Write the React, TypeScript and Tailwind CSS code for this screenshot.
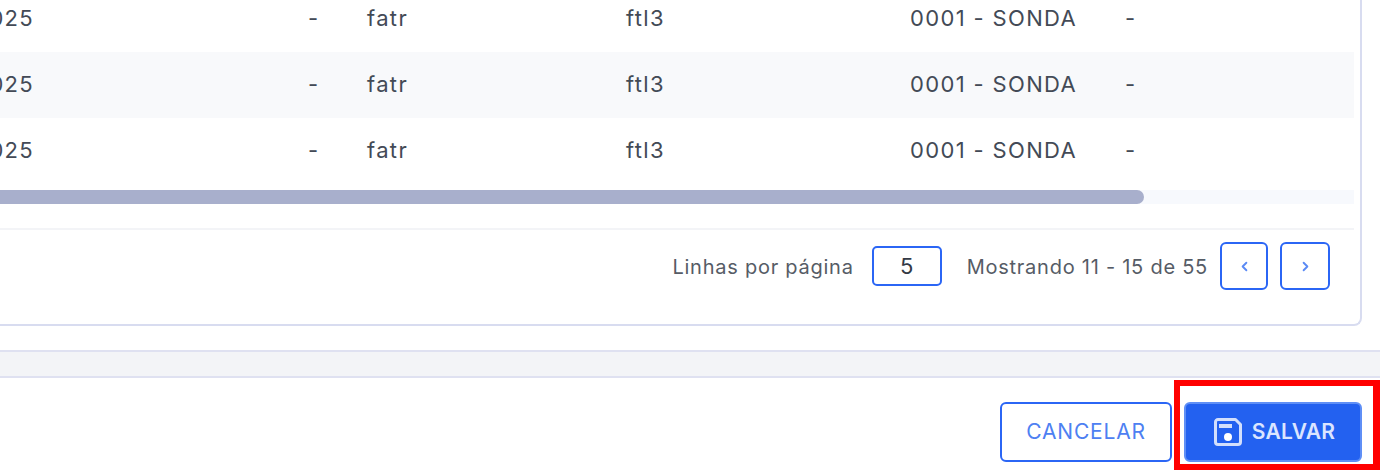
import React from 'react';
import { ChevronLeft, ChevronRight } from 'lucide-react';

const rows = [
  { shaded: false },
  { shaded: true },
  { shaded: false },
];

const SaveIcon = () => (
  <svg width="30" height="30" viewBox="0 0 30 30" fill="none" className="text-[#d3dffc]">
    <path
      d="M5 2.5h17.5L27.5 7.5V25a2.5 2.5 0 0 1-2.5 2.5H5A2.5 2.5 0 0 1 2.5 25V5A2.5 2.5 0 0 1 5 2.5z"
      stroke="currentColor"
      strokeWidth="3"
      strokeLinejoin="round"
    />
    <rect x="6" y="7" width="13" height="4" fill="currentColor" />
    <circle cx="15" cy="20" r="4" fill="#fff" />
  </svg>
);

const App: React.FC = () => {
  return (
    <div className="w-[1380px] h-[470px] overflow-hidden bg-white relative font-['Inter',sans-serif]">
      <div className="ml-[-120px] mt-[-14px] w-[1500px] flex flex-col h-[484px]">
        {/* Table card */}
        <div className="h-[364px] pr-[18px] shrink-0">
          <div className="h-[340px] bg-white border-r-2 border-b-2 border-[#d8dcf0] rounded-br-lg pr-[6px]">
            {/* Rows */}
            <div>
              {rows.map((row, idx) => (
                <div
                  key={idx}
                  className={`flex items-center h-[66px] pb-[2px] text-[22px] tracking-[1.35px] text-[#434a56] ${
                    row.shaded ? 'bg-[#f8f9fb]' : 'bg-white'
                  }`}
                >
                  <div className="w-[428px] pl-[25px]">01/01/2025</div>
                  <div className="w-[59px]">-</div>
                  <div className="w-[259px]">fatr</div>
                  <div className="w-[284px]">ftl3</div>
                  <div className="w-[215px]">0001 - SONDA</div>
                  <div>-</div>
                </div>
              ))}
            </div>

            {/* Horizontal scrollbar */}
            <div className="mt-[6px] h-[14px] bg-[#f7f9fd]">
              <div className="h-full w-[1264px] bg-[#a8afcc] rounded-r-lg" />
            </div>

            {/* Pagination */}
            <div className="mt-[24px] border-t-2 border-[#f3f4f7] flex items-center justify-end h-[96px] pb-[22px] pr-[24px] text-[20px] tracking-[0.75px] text-[#565c66]">
              <span className="pt-[1px]">Linhas por página</span>
              <div className="ml-[18px] w-[70px] h-[40px] border-2 border-[#2b66f5] rounded-[5px] flex items-center justify-center text-[22px] tracking-normal text-[#333a45]">
                5
              </div>
              <span className="ml-[25px] pt-[1px]">Mostrando 11 - 15 de 55</span>
              <button className="ml-[12px] w-[48px] h-[48px] border-2 border-[#2b66f5] rounded-[6px] flex items-center justify-center text-[#5b8af5]">
                <ChevronLeft size={15} strokeWidth={3} />
              </button>
              <button className="ml-[12px] w-[50px] h-[48px] border-2 border-[#2b66f5] rounded-[6px] flex items-center justify-center text-[#5b8af5]">
                <ChevronRight size={15} strokeWidth={3} />
              </button>
            </div>
          </div>
        </div>

        {/* Gray strip */}
        <div className="h-[28px] shrink-0 bg-[#f3f4f7] border-y-2 border-[#dfe1f1]" />

        {/* Footer actions */}
        <div className="flex justify-end items-start pt-[24px] pr-[18px] gap-[12px]">
          <button className="w-[172px] h-[60px] border-2 border-[#2b66f5] rounded-[6px] text-[21px] tracking-[0.8px] text-[#4d80f2] flex items-center justify-center">
            CANCELAR
          </button>
          <button className="w-[178px] h-[60px] pl-[2px] bg-[#2361f0] border-2 border-[#5f8ff6] rounded-[6px] text-[21px] tracking-[0.3px] font-semibold text-[#dbe5ff] flex items-center justify-center gap-[9px]">
            <SaveIcon />
            SALVAR
          </button>
        </div>
      </div>

      {/* Red highlight box on top of the save button */}
      <div className="absolute left-[1174px] top-[380px] w-[206px] h-[90px] border-[6px] border-r-[7px] border-[#ff0000] pointer-events-none" />
    </div>
  );
};

export default App;
